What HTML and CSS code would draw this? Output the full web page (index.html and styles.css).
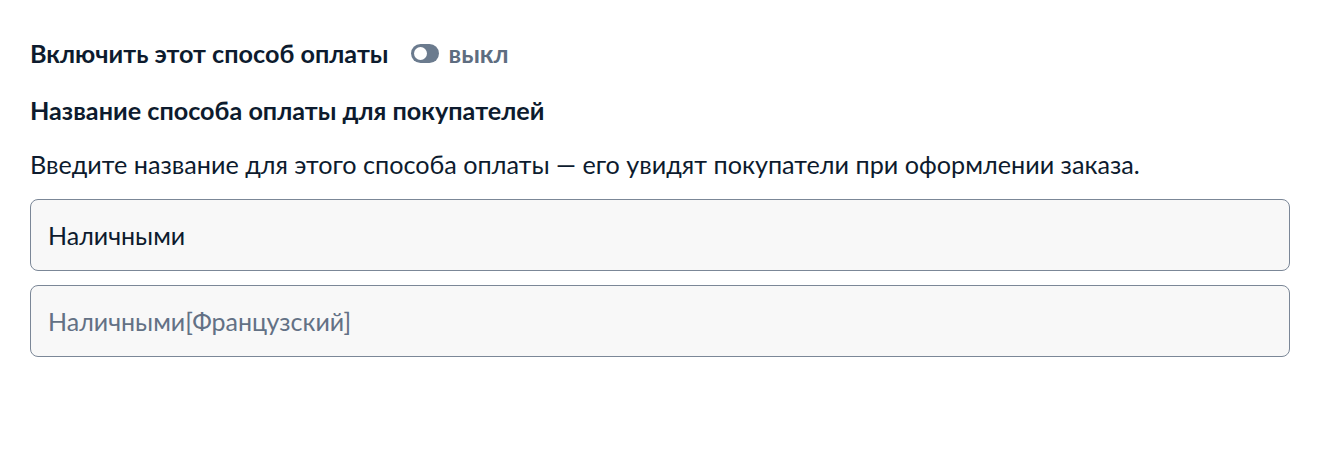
FILE: index.html
```html
<!DOCTYPE html>
<html lang="ru">
<head>
<meta charset="utf-8">
<link rel="stylesheet" href="styles.css">
</head>
<body>
<div class="page">
  <div class="toggle-row">
    <span class="label">Включить этот способ оплаты</span>
    <span class="switch"><span class="knob"></span></span>
    <span class="state">выкл</span>
  </div>
  <div class="heading">Название способа оплаты для покупателей</div>
  <p class="desc">Введите название для этого способа оплаты — его увидят покупатели при оформлении заказа.</p>
  <div class="field">Наличными</div>
  <div class="field placeholder">Наличными[Французский]</div>
</div>
</body>
</html>
```
FILE: styles.css
```css
* { box-sizing: border-box; }
html, body { margin: 0; padding: 0; background: #fff; }
body { font-family: Lato, "Noto Sans", sans-serif; color: #0d1b2e; }
.page { padding: 38px 38px 0 30px; }
.toggle-row { display: flex; align-items: center; height: 30px; }
.label { font-weight: 700; font-size: 25.2px; line-height: 30px; }
.switch { margin-left: 23px; width: 28px; height: 19px; border-radius: 10px; background: #6b7b8e; position: relative; }
.knob { position: absolute; left: 3px; top: 3px; width: 13px; height: 13px; border-radius: 50%; background: #fff; }
.state { margin-left: 9px; font-weight: 700; font-size: 25.2px; line-height: 30px; color: #5e6d80; }
.heading { margin-top: 27px; font-weight: 700; font-size: 25.2px; line-height: 30px; }
.desc { margin: 24px 0 0; font-size: 25.2px; line-height: 30px; }
.field { margin-top: 20px; height: 72px; border: 1px solid #7b8797; border-radius: 8px; background: #f8f8f8; padding: 0 17px; display: flex; align-items: center; font-size: 25px; }
.field + .field { margin-top: 14px; }
.placeholder { color: #637185; }
```
